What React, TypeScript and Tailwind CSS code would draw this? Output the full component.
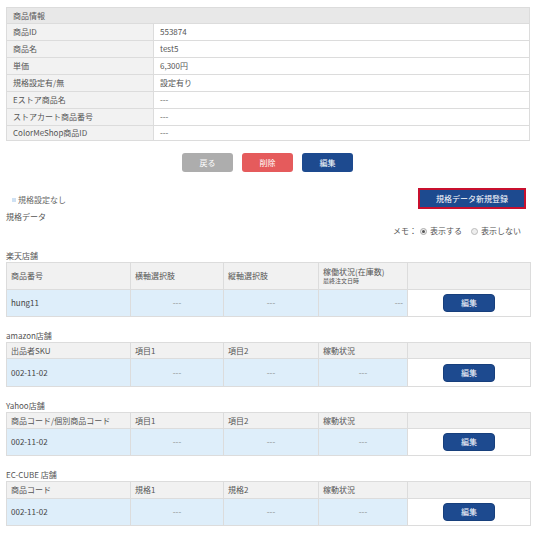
import React from "react";

const font = { fontFamily: '"Noto Sans CJK JP", "Noto Sans", sans-serif' };

function EditBtn() {
  return (
    <button className="w-[52px] h-[18px] rounded-[4px] bg-[#1d4a8f] border border-[#173f7c] text-white text-[8px] leading-[16px] align-middle">
      編集
    </button>
  );
}

type Shop = {
  name: string;
  headers: React.ReactNode[];
  first: string;
  headerH: string;
  dataH: string;
  mt: string;
  rightAlign4?: boolean;
};

function ShopTable({ shop }: { shop: Shop }) {
  const widths = ["w-[124px]", "w-[93px]", "w-[95px]", "w-[89px]", "w-[123px]"];
  return (
    <div>
      <div className={"h-[13px] leading-[13px] text-[8px] text-[#555] " + shop.mt}>{shop.name}</div>
      <table className="w-[524px] border-collapse table-fixed text-[8px] text-[#555]">
        <colgroup>
          {widths.map((w, i) => (
            <col key={i} className={w} />
          ))}
        </colgroup>
        <tbody>
          <tr className={shop.headerH}>
            {shop.headers.map((h, i) => (
              <td key={i} className="border border-[#dcdcdc] bg-[#f1f1f1] pl-[4px] py-0 align-middle leading-[10px] whitespace-nowrap">
                {h}
              </td>
            ))}
            <td className="border border-[#dcdcdc] bg-[#f1f1f1]"></td>
          </tr>
          <tr className={shop.dataH}>
            <td className="border border-[#dcdcdc] bg-[#deeefa] pl-[4px] leading-[10px] text-[#444]">{shop.first}</td>
            <td className="border border-[#dcdcdc] bg-[#deeefa] text-center leading-[10px] text-[#888]">---</td>
            <td className="border border-[#dcdcdc] bg-[#deeefa] text-center leading-[10px] text-[#888]">---</td>
            <td
              className={
                "border border-[#dcdcdc] bg-[#deeefa] leading-[10px] text-[#888] " +
                (shop.rightAlign4 ? "text-right pr-[4px]" : "text-center")
              }
            >
              ---
            </td>
            <td className="border border-[#dcdcdc] bg-white text-center align-middle leading-[10px] p-0">
              <EditBtn />
            </td>
          </tr>
        </tbody>
      </table>
    </div>
  );
}

export default function App() {
  const info: [string, string][] = [
    ["商品ID", "553874"],
    ["商品名", "test5"],
    ["単価", "6,300円"],
    ["規格設定有/無", "設定有り"],
    ["Eストア商品名", "---"],
    ["ストアカート商品番号", "---"],
    ["ColorMeShop商品ID", "---"],
  ];

  const shops: Shop[] = [
    {
      name: "楽天店舗",
      headers: [
        "商品番号",
        "横軸選択肢",
        "縦軸選択肢",
        <div key="x">
          <div className="text-[8px] leading-[10px]">稼働状況(在庫数)</div>
          <div className="text-[6px] leading-[8px]">最終注文日時</div>
        </div>,
      ],
      first: "hung11",
      headerH: "h-[27px]",
      dataH: "h-[27px]",
      mt: "mt-[11px]",
      rightAlign4: true,
    },
    {
      name: "amazon店舗",
      headers: ["出品者SKU", "項目1", "項目2", "稼動状況"],
      first: "002-11-02",
      headerH: "h-[16px]",
      dataH: "h-[28px]",
      mt: "mt-[12px]",
    },
    {
      name: "Yahoo店舗",
      headers: ["商品コード/個別商品コード", "項目1", "項目2", "稼動状況"],
      first: "002-11-02",
      headerH: "h-[16px]",
      dataH: "h-[27px]",
      mt: "mt-[12px]",
    },
    {
      name: "EC-CUBE 店舗",
      headers: ["商品コード", "規格1", "規格2", "稼動状況"],
      first: "002-11-02",
      headerH: "h-[17px]",
      dataH: "h-[27px]",
      mt: "mt-[12px]",
    },
  ];

  return (
    <div className="w-[535px] h-[537px] bg-white pt-[7px] px-[6px] text-[8px] text-[#555]" style={font}>
      <table className="w-[524px] border-collapse table-fixed">
        <colgroup>
          <col className="w-[147px]" />
          <col />
        </colgroup>
        <tbody>
          <tr className="h-[16px]">
            <td colSpan={2} className="border border-[#dcdcdc] bg-[#e8e8e8] pl-[6px] text-[#555] leading-[10px]">
              商品情報
            </td>
          </tr>
          {info.map(([k, v], i) => (
            <tr key={k} className={i === info.length - 1 ? "h-[15px]" : "h-[17px]"}>
              <td className="border border-[#dcdcdc] bg-[#f2f2f2] pl-[6px] leading-[10px]">{k}</td>
              <td className="border border-[#dcdcdc] bg-white pl-[6px] leading-[10px] text-[#555]">{v}</td>
            </tr>
          ))}
        </tbody>
      </table>

      <div className="flex justify-center gap-[9px] mt-[12px]">
        <button className="w-[51px] h-[19px] rounded-[3px] bg-[#adadad] text-white text-[8px]">戻る</button>
        <button className="w-[51px] h-[19px] rounded-[3px] bg-[#e55b5c] text-white text-[8px]">削除</button>
        <button className="w-[51px] h-[19px] rounded-[3px] bg-[#1d4a8f] text-white text-[8px]">編集</button>
      </div>

      <div className="flex justify-between items-end mt-[16px] pr-[3px]">
        <div className="flex items-center pl-[6px] pb-[4px] text-[8px] leading-[10px] text-[#666]">
          <span className="w-[4px] h-[4px] bg-[#cfe1f3] mr-[2px]"></span>
          規格設定なし
        </div>
        <button className="w-[108px] h-[21px] bg-[#1d4a8f] border-2 border-[#c8102e] text-white text-[8px] leading-[17px]">
          規格データ新規登録
        </button>
      </div>

      <div className="h-[14px] leading-[14px] mt-[1px] text-[8px] text-[#555]">規格データ</div>

      <div className="h-[14px] flex justify-end items-center pr-[8px] text-[8px] text-[#555]">
        <span>メモ：</span>
        <span className="ml-[3px] w-[7px] h-[7px] rounded-full border border-[#aaa] bg-[#eee] flex items-center justify-center">
          <span className="w-[3px] h-[3px] rounded-full bg-[#555]"></span>
        </span>
        <span className="ml-[3px]">表示する</span>
        <span className="ml-[9px] w-[7px] h-[7px] rounded-full border border-[#bbb] bg-[#eee]"></span>
        <span className="ml-[3px]">表示しない</span>
      </div>

      {shops.map((s) => (
        <ShopTable key={s.name} shop={s} />
      ))}
    </div>
  );
}
